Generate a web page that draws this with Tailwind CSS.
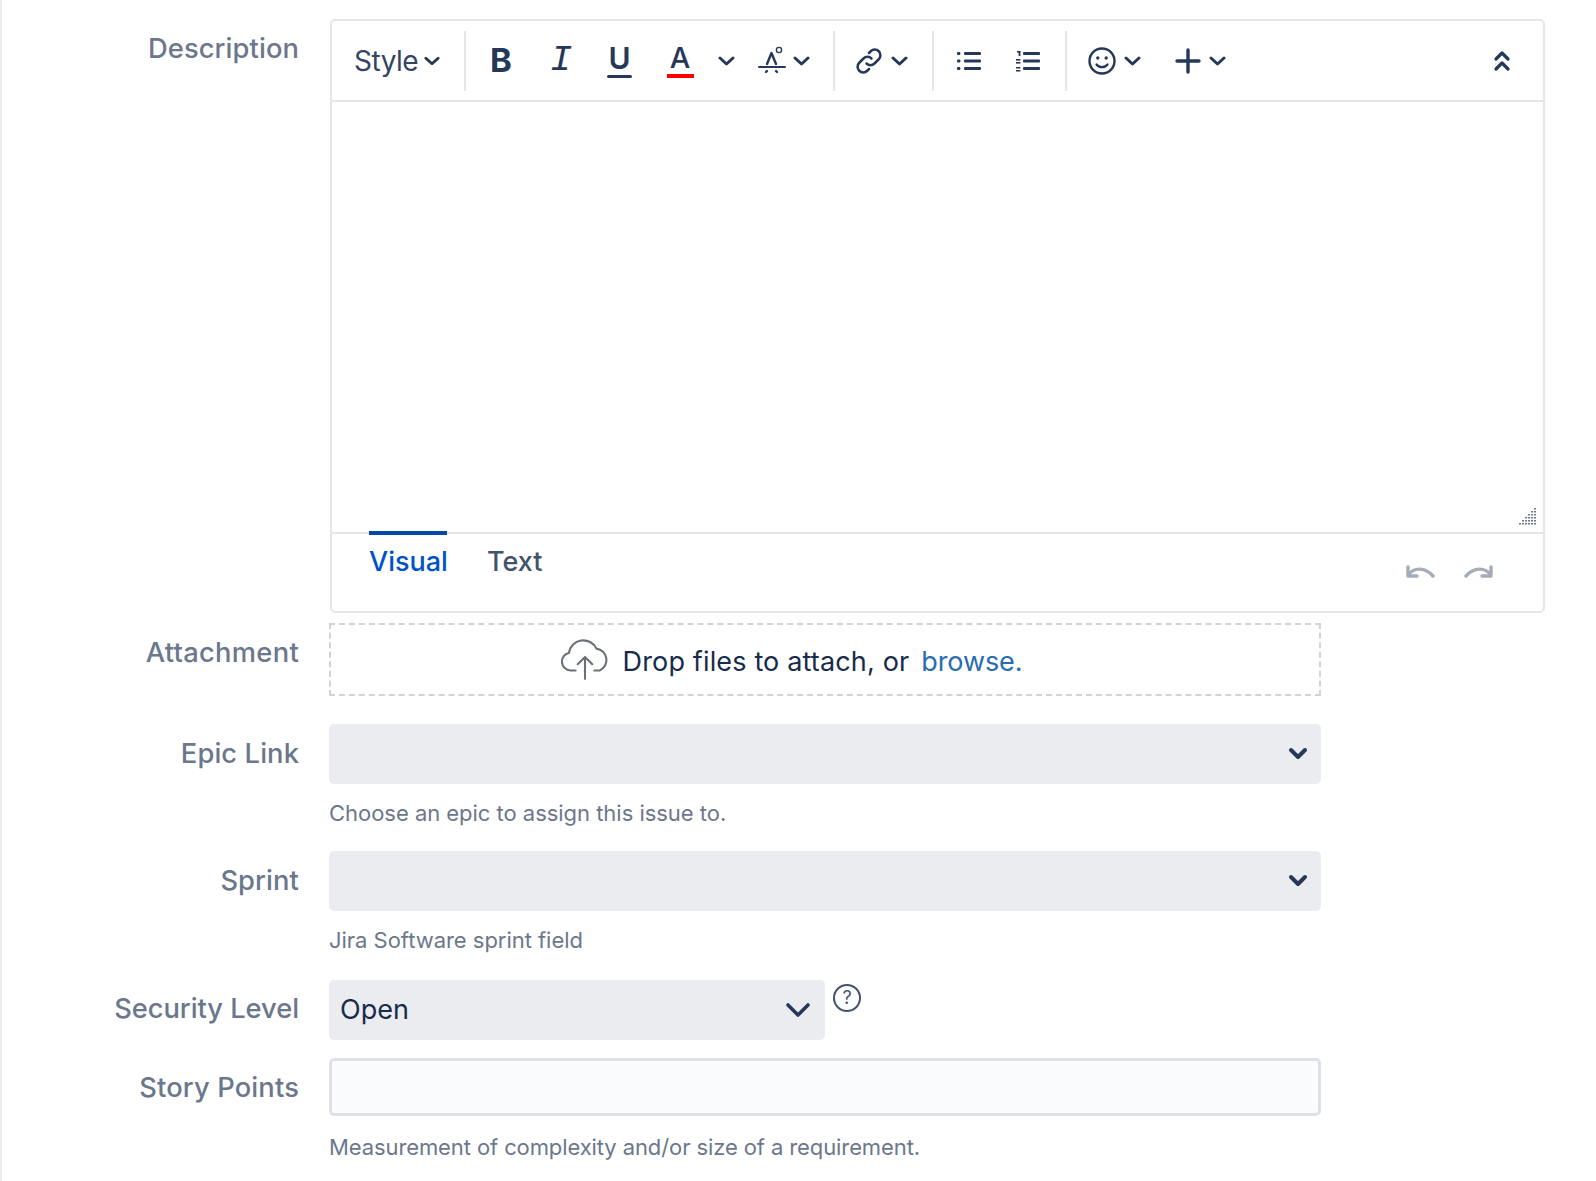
<!DOCTYPE html>
<html lang="en"><head><meta charset="utf-8"><title>Create issue form</title>
<script src="https://cdn.jsdelivr.net/npm/@tailwindcss/browser@4"></script></head>
<body class="bg-white">
<div class="w-[1596px] h-[1181px] overflow-hidden border-l-2 border-[#ebecf0] font-['Inter',sans-serif] text-[#42526e]">
  <div class="pt-[19px] flex flex-col">

    <div class="flex h-[594px]">
      <div class="w-[297px] text-right text-[27.3px] leading-[60px] text-[#6b778c] font-medium tracking-[0.1px]">Description</div>
      <div class="ml-[31px] w-[1215px] h-[594px] border-2 border-[#e4e6ea] rounded-[5px] flex flex-col">
        <div class="h-[81px] shrink-0 border-b-2 border-[#e4e6ea] flex items-center text-[#253858]">
          <div class="w-[134px] h-[60px] flex items-center border-r-2 border-[#e4e6ea] pl-[22px]">
            <span class="text-[28px] tracking-[-0.5px] text-[#344563]">Style</span>
            <svg class="ml-[6px]" width="16" height="12" viewBox="0 0 17 12" fill="none" stroke="#253858" stroke-width="3" stroke-linecap="round" stroke-linejoin="round"><path d="M2 3l6.5 6L15 3"/></svg>
          </div>
          <div class="w-[369px] h-[60px] flex items-center border-r-2 border-[#e4e6ea] relative">
            <span class="w-[70px] text-center text-[33px] font-bold text-[#253858]">B</span>
            <span class="w-[50px] text-center text-[37px] italic font-['Liberation_Mono',monospace]">I</span>
            <span class="w-[67px] flex flex-col items-center"><span class="text-[30px] leading-[28px] font-semibold">U</span><span class="w-[25px] h-[3px] bg-[#253858] rounded-full mt-[3px]"></span></span>
            <span class="w-[54px] flex flex-col items-center pt-[1px]"><span class="text-[29px] leading-[26px] font-medium">A</span><span class="w-[27px] h-[4px] bg-[#ff0000] mt-[3px]"></span></span>
            <svg class="ml-[11px]" width="17" height="12" viewBox="0 0 17 12" fill="none" stroke="#253858" stroke-width="3" stroke-linecap="round" stroke-linejoin="round"><path d="M2 3l6.5 6L15 3"/></svg>
            <svg class="ml-[23px]" width="28" height="32" viewBox="0 0 28 32" fill="none" stroke="#253858" stroke-linecap="round" stroke-linejoin="round"><path stroke-width="2" d="M1 22h26"/><path stroke-width="2.4" d="M9 19l4.5-11L18 19"/><circle cx="21" cy="5" r="2.6" stroke-width="1.4"/><path stroke-width="2.4" d="M8 27l1-1M19 27l-1-1"/></svg>
            <svg class="ml-[7px]" width="17" height="12" viewBox="0 0 17 12" fill="none" stroke="#253858" stroke-width="3" stroke-linecap="round" stroke-linejoin="round"><path d="M2 3l6.5 6L15 3"/></svg>
          </div>
          <div class="w-[99px] h-[60px] flex items-center border-r-2 border-[#e4e6ea] pl-[19px]">
            <svg width="30" height="30" viewBox="0 0 24 24" fill="none" stroke="#253858" stroke-width="2" stroke-linecap="round" stroke-linejoin="round"><path d="M10 14a4.5 4.5 0 0 0 6.4 0l3.4-3.4a4.5 4.5 0 0 0-6.4-6.4l-1.4 1.4"/><path d="M14 10a4.5 4.5 0 0 0-6.4 0l-3.4 3.4a4.5 4.5 0 0 0 6.4 6.4l1.4-1.4"/></svg>
            <svg class="ml-[7px]" width="17" height="12" viewBox="0 0 17 12" fill="none" stroke="#253858" stroke-width="3" stroke-linecap="round" stroke-linejoin="round"><path d="M2 3l6.5 6L15 3"/></svg>
          </div>
          <div class="w-[133px] h-[60px] flex items-center border-r-2 border-[#e4e6ea] pl-[22px] gap-[33px]">
            <svg width="26" height="22" viewBox="0 0 26 22" fill="#253858"><rect x="1" y="2" width="3.4" height="3" rx="1"/><rect x="1" y="9.5" width="3.4" height="3" rx="1"/><rect x="1" y="17" width="3.4" height="3" rx="1"/><rect x="8" y="2" width="17" height="3" rx="1"/><rect x="8" y="9.5" width="17" height="3" rx="1"/><rect x="8" y="17" width="17" height="3" rx="1"/></svg>
            <svg width="26" height="22" viewBox="0 0 26 22" fill="#253858"><rect x="2" y="1" width="3.4" height="1.6"/><rect x="3.6" y="1" width="1.8" height="5"/><rect x="1" y="9" width="4.4" height="1.6"/><rect x="1" y="12" width="4.4" height="1.6"/><rect x="1" y="17" width="4.4" height="1.5"/><rect x="1" y="20" width="4.4" height="1.5"/><rect x="8" y="2" width="17" height="3" rx="1"/><rect x="8" y="9.5" width="17" height="3" rx="1"/><rect x="8" y="17" width="17" height="3" rx="1"/></svg>
          </div>
          <div class="flex items-center pl-[20px]">
            <svg width="30" height="30" viewBox="0 0 30 30" fill="none" stroke="#253858" stroke-linecap="round"><circle cx="15" cy="15" r="12.5" stroke-width="2.4"/><circle cx="10.8" cy="12" r="1.7" fill="#253858" stroke="none"/><circle cx="19.2" cy="12" r="1.7" fill="#253858" stroke="none"/><path stroke-width="2.2" d="M9.5 18.5c2.5 3.5 8.5 3.5 11 0"/></svg>
            <svg class="ml-[7px]" width="17" height="12" viewBox="0 0 17 12" fill="none" stroke="#253858" stroke-width="3" stroke-linecap="round" stroke-linejoin="round"><path d="M2 3l6.5 6L15 3"/></svg>
            <svg class="ml-[34px]" width="26" height="26" viewBox="0 0 26 26" fill="none" stroke="#253858" stroke-width="3.4" stroke-linecap="round"><path d="M13 2v22M2 13h22"/></svg>
            <svg class="ml-[8px]" width="17" height="12" viewBox="0 0 17 12" fill="none" stroke="#253858" stroke-width="3" stroke-linecap="round" stroke-linejoin="round"><path d="M2 3l6.5 6L15 3"/></svg>
          </div>
          <svg class="ml-auto mr-[32px]" width="18" height="22" viewBox="0 0 18 22" fill="none" stroke="#253858" stroke-width="3.2" stroke-linecap="round" stroke-linejoin="round"><path d="M3 9l6-6 6 6M3 19l6-6 6 6"/></svg>
        </div>
        <div class="h-[432px] shrink-0 relative border-b-2 border-[#e4e6ea]">
          <svg class="absolute right-[6px] bottom-[6px]" width="20" height="20" viewBox="0 0 20 20" fill="#6b778c"><path d="M17 2h2v1.5h-2zM14 5h2v1.5h-2zM17 5h2v1.5h-2zM11 8h2v1.5h-2zM14 8h2v1.5h-2zM17 8h2v1.5h-2zM8 11h2v1.5H8zM11 11h2v1.5h-2zM14 11h2v1.5h-2zM17 11h2v1.5h-2zM5 14h2v1.5H5zM8 14h2v1.5H8zM11 14h2v1.5h-2zM14 14h2v1.5h-2zM17 14h2v1.5h-2zM2 17h2v1.5H2zM5 17h2v1.5H5zM8 17h2v1.5H8zM11 17h2v1.5h-2zM14 17h2v1.5h-2zM17 17h2v1.5h-2z"/></svg>
        </div>
        <div class="relative flex-1 flex items-start pl-[37px]">
          <div class="w-[78px] -mt-[3px] border-t-[4px] border-[#0747a6] text-center text-[#0052cc] text-[27px] leading-[54px] font-medium">Visual</div>
          <div class="ml-[40px] text-[#42526e] text-[27px] leading-[56px] font-medium">Text</div>
          <div class="ml-auto mr-[50px] mt-[30px] flex gap-[29px]">
            <svg width="29" height="17" viewBox="0 0 29 17" fill="none" stroke="#a5adba" stroke-width="3.4" stroke-linecap="round" stroke-linejoin="round"><path d="M2 3v9h9M2 11c6-8 17-8 25 1"/></svg>
            <svg width="29" height="17" viewBox="0 0 29 17" fill="none" stroke="#a5adba" stroke-width="3.4" stroke-linecap="round" stroke-linejoin="round"><path d="M27 3v9h-9M27 11C21 3 10 3 2 12"/></svg>
          </div>
        </div>
      </div>
    </div>

    <div class="flex mt-[10px] h-[73px]">
      <div class="w-[297px] text-right text-[27.3px] leading-[59px] text-[#6b778c] font-medium tracking-[0.3px]">Attachment</div>
      <div class="ml-[30px] w-[992px] h-[73px] border-2 border-dashed border-[#d0d3d8] flex items-center justify-center pr-[68px]">
        <svg class="-mt-[4px]" width="50" height="44" viewBox="0 0 48 42" fill="none" stroke="#6b6f76" stroke-width="2" stroke-linecap="round" stroke-linejoin="round"><path d="M15 33H10a8.5 8.5 0 0 1-1.5-16.8A14 14 0 0 1 35 12a11 11 0 0 1 3 21H33"/><path d="M24 41V20M17 27l7-7 7 7"/></svg>
        <span class="ml-[13px] pt-[5px] text-[27px] text-[#172b4d] tracking-[0.15px]">Drop files to attach, or</span>
        <span class="ml-[12px] pt-[5px] text-[27px] text-[#2b6cb0] tracking-[-0.1px]">browse.</span>
      </div>
    </div>

    <div class="flex mt-[28px] h-[60px]">
      <div class="w-[297px] text-right text-[27.3px] leading-[60px] text-[#6b778c] font-medium tracking-[0.1px]">Epic Link</div>
      <div class="ml-[30px] w-[992px] h-[60px] rounded-[5px] bg-[#ebecf0] flex items-center justify-end pr-[13px]">
        <svg width="20" height="14" viewBox="0 0 20 14" fill="none" stroke="#253858" stroke-width="4" stroke-linecap="round" stroke-linejoin="round"><path d="M3 3l7 7 7-7"/></svg>
      </div>
    </div>
    <div class="ml-[327px] mt-[14px] h-[33px] text-[22px] leading-[30px] text-[#6b778c] tracking-[-0.03px]">Choose an epic to assign this issue to.</div>

    <div class="flex mt-[20px] h-[60px]">
      <div class="w-[297px] text-right text-[27.3px] leading-[60px] text-[#6b778c] font-medium tracking-[0.1px]">Sprint</div>
      <div class="ml-[30px] w-[992px] h-[60px] rounded-[5px] bg-[#ebecf0] flex items-center justify-end pr-[13px]">
        <svg width="20" height="14" viewBox="0 0 20 14" fill="none" stroke="#253858" stroke-width="4" stroke-linecap="round" stroke-linejoin="round"><path d="M3 3l7 7 7-7"/></svg>
      </div>
    </div>
    <div class="ml-[327px] mt-[14px] h-[33px] text-[22px] leading-[30px] text-[#6b778c] tracking-[-0.03px]">Jira Software sprint field</div>

    <div class="flex mt-[22px] h-[60px]">
      <div class="w-[297px] text-right text-[27.3px] leading-[58px] text-[#6b778c] font-medium tracking-[-0.05px]">Security Level</div>
      <div class="ml-[30px] w-[496px] h-[60px] rounded-[5px] bg-[#ebecf0] flex items-center justify-between pl-[11px] pr-[14px]">
        <span class="text-[27px] text-[#172b4d] pt-[1px]">Open</span>
        <svg width="26" height="16" viewBox="0 0 26 16" fill="none" stroke="#253858" stroke-width="3.6" stroke-linecap="round" stroke-linejoin="round"><path d="M3 3l10 10 10-10"/></svg>
      </div>
      <svg class="ml-[7px] mt-[3px]" width="30" height="30" viewBox="0 0 30 30" fill="none" stroke="#42526e"><circle cx="15" cy="15" r="13" stroke-width="2"/><text x="15" y="21" text-anchor="middle" font-size="18" fill="#42526e" stroke="none" font-family="Inter, sans-serif">?</text></svg>
    </div>

    <div class="flex mt-[18px] h-[58px]">
      <div class="w-[297px] text-right text-[27.3px] leading-[59px] text-[#6b778c] font-medium tracking-[0.15px]">Story Points</div>
      <div class="ml-[30px] w-[992px] h-[58px] rounded-[5px] bg-[#fafbfc] border-[3px] border-[#dfe1e6]"></div>
    </div>
    <div class="ml-[327px] mt-[16px] h-[31px] text-[22px] leading-[30px] text-[#6b778c] tracking-[-0.1px]">Measurement of complexity and/or size of a requirement.</div>
  </div>
</div>
</body></html>
